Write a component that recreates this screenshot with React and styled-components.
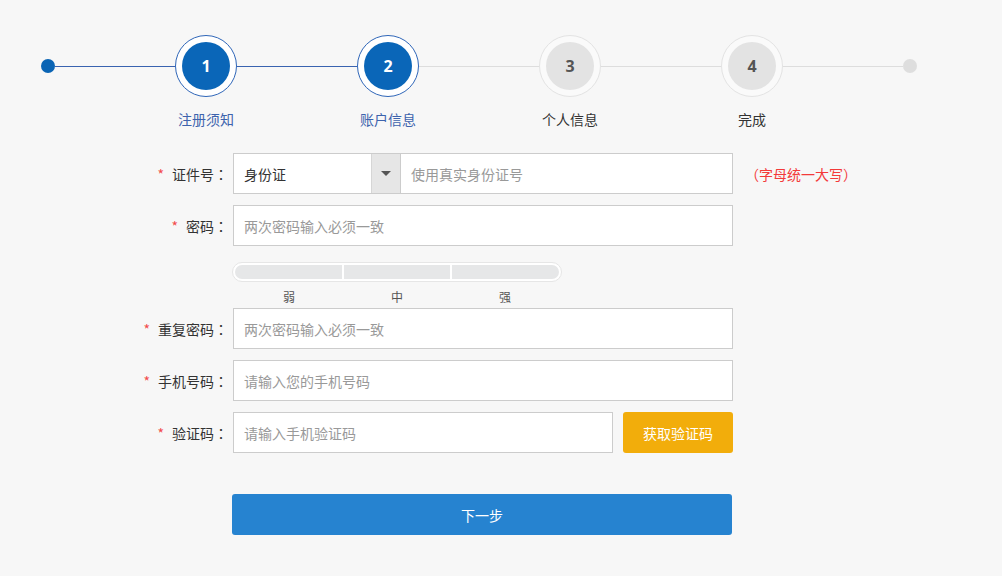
import React from "react";
import styled, { createGlobalStyle } from "styled-components";

const GlobalStyle = createGlobalStyle`
  html, body {
    margin: 0;
    padding: 0;
    background: #f7f7f7;
  }
  body {
    font-family: "Noto Sans CJK SC", "Noto Sans", sans-serif;
    font-size: 14px;
    color: #333;
  }
  input::placeholder {
    color: #999;
  }
`;

const Page = styled.div`
  width: 1002px;
  height: 576px;
  box-sizing: border-box;
  background: #f7f7f7;
  overflow: hidden;
`;

const Stepper = styled.div`
  display: flex;
  align-items: flex-start;
  padding: 35px 0 0 41px;
`;

const Dot = styled.div`
  flex: 0 0 14px;
  height: 14px;
  margin-top: 24px;
  border-radius: 50%;
  background: ${(p) => (p.$active ? "#0a64b4" : "#dedede")};
`;

const Line = styled.div`
  flex: 0 0 120px;
  height: 1px;
  margin-top: 31px;
  background: ${(p) => (p.$active ? "#3a63b0" : "#dddddd")};
`;

const Step = styled.div`
  flex: 0 0 62px;
  display: flex;
  flex-direction: column;
  align-items: center;
`;

const Ring = styled.div`
  width: 62px;
  height: 62px;
  box-sizing: border-box;
  border-radius: 50%;
  border: 1px solid ${(p) => (p.$active ? "#2f66b8" : "#e3e3e3")};
  background: ${(p) => (p.$active ? "#ffffff" : "#fafafa")};
  display: flex;
  align-items: center;
  justify-content: center;
`;

const Bubble = styled.div`
  width: 48px;
  height: 48px;
  border-radius: 50%;
  background: ${(p) => (p.$active ? "#0a66b8" : "#e3e3e3")};
  color: ${(p) => (p.$active ? "#fff" : "#555")};
  font-family: "Open Sans", "Liberation Sans", sans-serif;
  font-weight: 700;
  font-size: 16px;
  display: flex;
  align-items: center;
  justify-content: center;
`;

const StepLabel = styled.div`
  margin-top: 12px;
  line-height: 20px;
  font-size: 14px;
  white-space: nowrap;
  color: ${(p) => (p.$active ? "#3d63ad" : "#333")};
`;

const Form = styled.div`
  margin-top: 24px;
  display: flex;
  flex-direction: column;
`;

const Row = styled.div`
  display: flex;
  align-items: center;
  height: 41px;
  margin-top: ${(p) => p.$mt || 0}px;
`;

const Label = styled.label`
  flex: 0 0 228px;
  margin-right: 5px;
  text-align: right;
  font-size: 14px;
  color: #333;
  white-space: nowrap;
`;

const Star = styled.span`
  color: #f24b4b;
  margin-right: 8px;
`;

const Colon = styled.span`
  font-family: "Noto Sans CJK TC", "Noto Sans CJK SC", sans-serif;
`;

const TextInput = styled.input`
  box-sizing: border-box;
  width: ${(p) => p.$w || 500}px;
  height: 41px;
  margin: 0;
  padding: 0 10px;
  border: 1px solid #cccccc;
  background: #fff;
  font-family: inherit;
  font-size: 14px;
  color: #333;
  outline: none;
`;

const IdGroup = styled.div`
  display: flex;
  width: 500px;
  height: 41px;
`;

const SelectBox = styled.div`
  box-sizing: border-box;
  flex: 0 0 168px;
  display: flex;
  border: 1px solid #cccccc;
  background: #fff;
`;

const SelectValue = styled.div`
  flex: 1;
  padding-left: 10px;
  display: flex;
  align-items: center;
  font-size: 14px;
  color: #333;
`;

const Caret = styled.div`
  flex: 0 0 28px;
  background: #e6e6e6;
  border-left: 1px solid #d6d6d6;
  display: flex;
  align-items: center;
  justify-content: center;
  &::after {
    content: "";
    border-left: 5px solid transparent;
    border-right: 5px solid transparent;
    border-top: 5px solid #555;
  }
`;

const IdInput = styled(TextInput)`
  flex: 1;
  width: auto;
  border-left: none;
`;

const Hint = styled.span`
  margin-left: 12px;
  color: #f33a3a;
  font-size: 14px;
`;

const Strength = styled.div`
  margin: 16px 0 0 232px;
  width: 330px;
`;

const Bar = styled.div`
  box-sizing: border-box;
  height: 20px;
  padding: 2px;
  display: flex;
  gap: 2px;
  border: 1px solid #e6e6e6;
  border-radius: 10px;
  background: #fff;
`;

const Seg = styled.div`
  flex: 1;
  background: #e6e7e8;
  &:first-child {
    border-radius: 8px 0 0 8px;
  }
  &:last-child {
    border-radius: 0 8px 8px 0;
  }
`;

const SegLabels = styled.div`
  display: flex;
  padding: 0 3px;
  margin-top: 7px;
`;

const SegLabel = styled.span`
  flex: 1;
  text-align: center;
  font-size: 12px;
  line-height: 16px;
  color: #555;
`;

const CodeButton = styled.button`
  box-sizing: border-box;
  width: 110px;
  height: 41px;
  margin-left: 10px;
  border: none;
  border-radius: 3px;
  background: #f2ad0b;
  color: #fff;
  font-family: inherit;
  font-size: 14px;
  cursor: pointer;
`;

const NextButton = styled.button`
  box-sizing: border-box;
  width: 500px;
  height: 41px;
  margin: 41px 0 0 232px;
  border: none;
  border-radius: 3px;
  background: #2683d0;
  color: #fff;
  font-family: inherit;
  font-size: 14px;
  cursor: pointer;
`;

const steps = [
  { n: 1, label: "注册须知", active: true },
  { n: 2, label: "账户信息", active: true },
  { n: 3, label: "个人信息", active: false },
  { n: 4, label: "完成", active: false },
];

const Field = ({ children }) => (
  <Label>
    <Star>*</Star>
    {children}
    <Colon>：</Colon>
  </Label>
);

export default function App() {
  return (
    <Page>
      <GlobalStyle />
      <Stepper>
        <Dot $active />
        {steps.map((s) => (
          <React.Fragment key={s.n}>
            <Line $active={s.active} />
            <Step>
              <Ring $active={s.active}>
                <Bubble $active={s.active}>{s.n}</Bubble>
              </Ring>
              <StepLabel $active={s.active}>{s.label}</StepLabel>
            </Step>
          </React.Fragment>
        ))}
        <Line />
        <Dot />
      </Stepper>

      <Form>
        <Row>
          <Field>证件号</Field>
          <IdGroup>
            <SelectBox>
              <SelectValue>身份证</SelectValue>
              <Caret />
            </SelectBox>
            <IdInput placeholder="使用真实身份证号" />
          </IdGroup>
          <Hint>（字母统一大写）</Hint>
        </Row>
        <Row $mt={11}>
          <Field>密码</Field>
          <TextInput type="text" placeholder="两次密码输入必须一致" />
        </Row>
        <Strength>
          <Bar>
            <Seg />
            <Seg />
            <Seg />
          </Bar>
          <SegLabels>
            <SegLabel>弱</SegLabel>
            <SegLabel>中</SegLabel>
            <SegLabel>强</SegLabel>
          </SegLabels>
        </Strength>
        <Row $mt={3}>
          <Field>重复密码</Field>
          <TextInput type="text" placeholder="两次密码输入必须一致" />
        </Row>
        <Row $mt={11}>
          <Field>手机号码</Field>
          <TextInput placeholder="请输入您的手机号码" />
        </Row>
        <Row $mt={11}>
          <Field>验证码</Field>
          <TextInput $w={380} placeholder="请输入手机验证码" />
          <CodeButton>获取验证码</CodeButton>
        </Row>
        <NextButton>下一步</NextButton>
      </Form>
    </Page>
  );
}
